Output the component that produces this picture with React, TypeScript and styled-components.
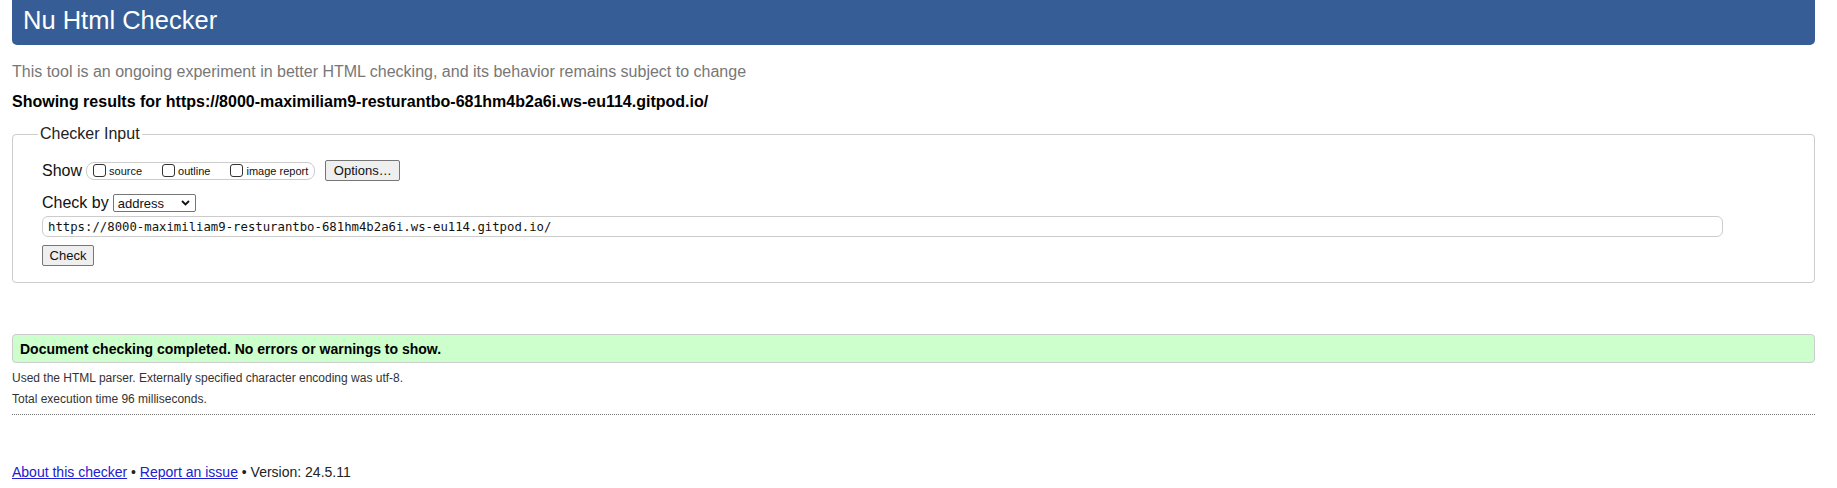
import React from "react";
import styled, { createGlobalStyle } from "styled-components";

const Global = createGlobalStyle`
  html, body { margin: 0; padding: 0; background: #fff; }
  body { font-family: "Liberation Sans", Arial, sans-serif; color: #000; }
`;

const Page = styled.div`
  display: flex;
  flex-direction: column;
  padding: 0 22px 0 12px;
`;

const Header = styled.header`
  height: 45px;
  background: #365d95;
  border-radius: 0 0 5px 5px;
  display: flex;
  align-items: center;
  padding: 0 11px 3px;
  box-sizing: border-box;
`;

const Title = styled.h1`
  margin: 0;
  font-size: 25.5px;
  font-weight: normal;
  color: #fff;
  line-height: 1;
`;

const Tagline = styled.p`
  margin: 17px 0 0;
  font-size: 16px;
  line-height: 20px;
  color: #777;
`;

const Showing = styled.p`
  margin: 10px 0 0;
  font-size: 16px;
  font-weight: bold;
  line-height: 20px;
  color: #000;
`;

const Fieldset = styled.fieldset`
  margin: 13px 0 0;
  padding: 0 0 16px 29px;
  border: 1px solid #ccc;
  border-radius: 4px;
  min-width: 0;
`;

const Legend = styled.legend`
  margin-left: -4px;
  padding: 0 2px;
  font-size: 16px;
  line-height: 18px;
  color: #222;
`;

const FieldRow = styled.div<{ $top: number }>`
  display: flex;
  align-items: center;
  margin-top: ${(p) => p.$top}px;
`;

const Label = styled.span`
  font-size: 16px;
  line-height: 20px;
  color: #111;
  margin-right: 4px;
`;

const CheckGroup = styled.div`
  display: inline-flex;
  align-items: center;
  height: 18px;
  box-sizing: border-box;
  border: 1px solid #ccc;
  border-radius: 8px;
  padding: 0 6px 0 6px;
  gap: 20px;
`;

const CheckItem = styled.label`
  display: inline-flex;
  align-items: center;
  font-size: 11px;
  color: #111;
  gap: 3px;
`;

const Box = styled.span`
  display: inline-block;
  width: 13px;
  height: 13px;
  box-sizing: border-box;
  border: 1px solid #333;
  border-radius: 3px;
  background: #fff;
`;

const Button = styled.button<{ $w: number }>`
  font-family: "Liberation Sans", Arial, sans-serif;
  font-size: 13px;
  height: 21px;
  width: ${(p) => p.$w}px;
  padding: 0;
  background: #efefef;
  border: 1px solid #767676;
  border-radius: 2px;
  color: #111;
  line-height: 19px;
`;

const Select = styled.div`
  display: inline-flex;
  align-items: center;
  justify-content: space-between;
  width: 83px;
  height: 18px;
  box-sizing: border-box;
  border: 1px solid #767676;
  border-radius: 2px;
  padding: 0 5px 0 4px;
  font-size: 13px;
  color: #111;
  margin-left: 1px;
`;

const UrlInput = styled.div`
  width: 1681px;
  height: 21px;
  box-sizing: border-box;
  border: 1px solid #ccc;
  border-radius: 6px;
  padding: 0 5px;
  display: flex;
  align-items: center;
  font-family: "DejaVu Sans Mono", "Liberation Mono", monospace;
  font-size: 12.3px;
  color: #111;
`;

const Success = styled.div`
  margin-top: 51px;
  height: 29px;
  box-sizing: border-box;
  border: 1px solid #ccc;
  border-radius: 4px;
  background: #ccffcc;
  display: flex;
  align-items: center;
  padding-left: 7px;
  font-size: 14px;
  font-weight: bold;
  color: #000;
`;

const Detail = styled.p<{ $top: number }>`
  margin: ${(p) => p.$top}px 0 0;
  font-size: 12px;
  line-height: 16px;
  color: #333;
`;

const Rule = styled.hr`
  margin: 7px 0 0;
  border: 0;
  border-top: 1px dotted #777;
  height: 0;
`;

const Footer = styled.footer`
  margin-top: 48px;
  font-size: 14px;
  line-height: 18px;
  color: #222;
`;

const Link = styled.a`
  color: #2020d0;
  text-decoration: underline;
`;

const Chevron = () => (
  <svg width="9" height="6" viewBox="0 0 9 6">
    <path d="M1 1 L4.5 4.5 L8 1" fill="none" stroke="#111" strokeWidth="1.8" />
  </svg>
);

export default function App() {
  return (
    <>
      <Global />
      <Page>
        <Header>
          <Title>Nu Html Checker</Title>
        </Header>
        <Tagline>
          This tool is an ongoing experiment in better HTML checking, and its behavior remains subject to change
        </Tagline>
        <Showing>
          Showing results for https://8000-maximiliam9-resturantbo-681hm4b2a6i.ws-eu114.gitpod.io/
        </Showing>
        <Fieldset>
          <Legend>Checker Input</Legend>
          <FieldRow $top={17}>
            <Label>Show</Label>
            <CheckGroup>
              <CheckItem>
                <Box />
                source
              </CheckItem>
              <CheckItem>
                <Box />
                outline
              </CheckItem>
              <CheckItem>
                <Box />
                image report
              </CheckItem>
            </CheckGroup>
            <Button $w={75} style={{ marginLeft: 10 }}>
              Options…
            </Button>
          </FieldRow>
          <FieldRow $top={12}>
            <Label style={{ marginRight: 3 }}>Check by</Label>
            <Select>
              address
              <Chevron />
            </Select>
          </FieldRow>
          <FieldRow $top={3}>
            <UrlInput>https://8000-maximiliam9-resturantbo-681hm4b2a6i.ws-eu114.gitpod.io/</UrlInput>
          </FieldRow>
          <FieldRow $top={8}>
            <Button $w={52}>Check</Button>
          </FieldRow>
        </Fieldset>
        <Success>Document checking completed. No errors or warnings to show.</Success>
        <Detail $top={7}>Used the HTML parser. Externally specified character encoding was utf-8.</Detail>
        <Detail $top={5}>Total execution time 96 milliseconds.</Detail>
        <Rule />
        <Footer>
          <Link href="#">About this checker</Link> • <Link href="#">Report an issue</Link> • Version: 24.5.11
        </Footer>
      </Page>
    </>
  );
}
